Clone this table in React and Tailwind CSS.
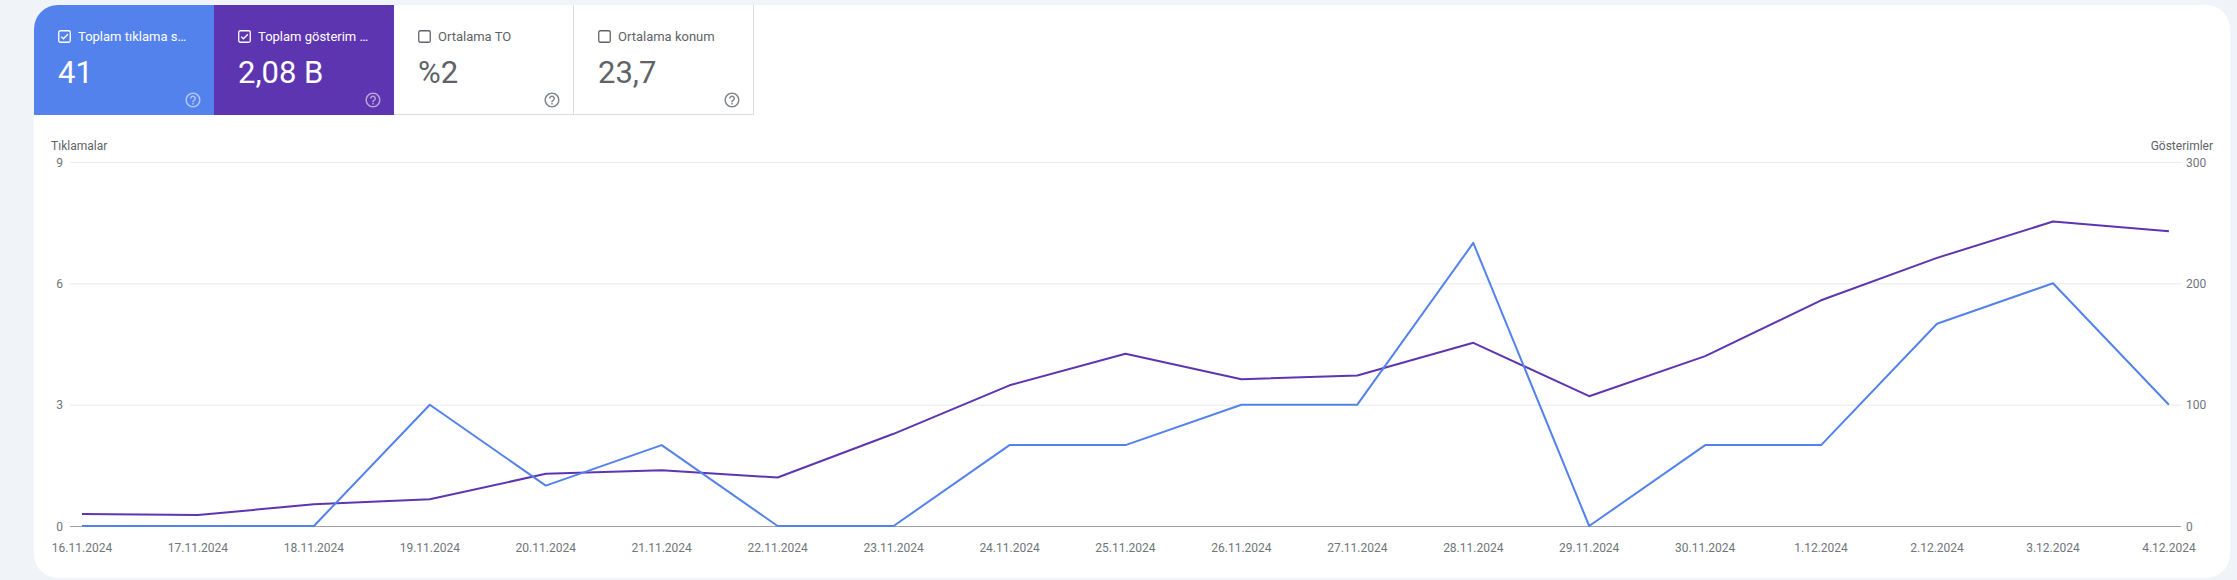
import React from "react";

const BLUE = "#5482ec";
const PURPLE = "#5e35b1";

const dates = [
    "16.11.2024", "17.11.2024", "18.11.2024", "19.11.2024", "20.11.2024", "21.11.2024", "22.11.2024",
    "23.11.2024", "24.11.2024", "25.11.2024", "26.11.2024", "27.11.2024", "28.11.2024", "29.11.2024",
    "30.11.2024", "1.12.2024", "2.12.2024", "3.12.2024", "4.12.2024",
];
const clicks = [0, 0, 0, 3, 1, 2, 0, 0, 2, 2, 3, 3, 7, 0, 2, 2, 5, 6, 3];
const impressions = [10, 9, 18, 22, 43, 46, 40, 76, 116, 142, 121, 124, 151, 107, 140, 186, 221, 251, 243];

const metrics = [
    { label: "Toplam tıklama sayısı", value: "41", on: true, bg: "bg-[#5482ec]" },
    { label: "Toplam gösterim sayısı", value: "2,08 B", on: true, bg: "bg-[#5e35b1]" },
    { label: "Ortalama TO", value: "%2", on: false },
    { label: "Ortalama konum", value: "23,7", on: false },
];

function Checkbox({ on }) {
    const c = on ? "#ffffff" : "#5f6368";
    return (
        <svg width="13" height="13" viewBox="0 0 13 13" className="shrink-0">
            <rect x="0.75" y="0.75" width="11.5" height="11.5" rx="1.5" fill="none" stroke={c} strokeWidth="1.3" />
            {on && <path d="M3.2 6.6 L5.4 8.8 L9.9 4.2" fill="none" stroke={c} strokeWidth="1.3" />}
        </svg>
    );
}

function HelpIcon({ color }) {
    return (
        <svg width="18" height="18" viewBox="0 0 24 24" fill={color}>
            <path d="M11 18h2v-2h-2v2zm1-16C6.48 2 2 6.48 2 12s4.48 10 10 10 10-4.48 10-10S17.52 2 12 2zm0 18c-4.41 0-8-3.59-8-8s3.59-8 8-8 8 3.59 8 8-3.59 8-8 8zm0-14c-2.21 0-4 1.79-4 4h2c0-1.1.9-2 2-2s2 .9 2 2c0 2-3 1.75-3 5h2c0-2.25 3-2.5 3-5 0-2.21-1.79-4-4-4z" />
        </svg>
    );
}

function Tile({ m }) {
    const box = m.on
        ? `${m.bg} text-white`
        : "bg-white text-[#5f6368] border-r border-b border-[#dadce0]";
    return (
        <div className={`w-[180px] h-[110px] flex flex-col pl-6 pr-3 pt-[22px] pb-3 ${box}`}>
            <div className="h-5 flex items-center gap-[7px] mr-3 min-w-0">
                <Checkbox on={m.on} />
                <span className="text-[13px] truncate">{m.label}</span>
            </div>
            <div className="mt-[8px] text-[31px] leading-9">{m.value}</div>
            <div className="mt-auto flex justify-end">
                <HelpIcon color={m.on ? "rgba(255,255,255,0.55)" : "#80868b"} />
            </div>
        </div>
    );
}

function Chart() {
    const W = 2196;
    const H = 424;
    const base = 372;
    const span = 364;
    const x0 = 48;
    const step = 115.94;
    const xs = dates.map((_, i) => x0 + i * step);
    const pts = (arr, max) => arr.map((v, i) => `${xs[i].toFixed(1)},${(base - (v * span) / max).toFixed(1)}`).join(" ");
    const grid = [
        { y: 8.5, l: "9", r: "300" },
        { y: 129.8, l: "6", r: "200" },
        { y: 251.2, l: "3", r: "100" },
        { y: 372.5, l: "0", r: "0" },
    ];
    return (
        <svg width={W} height={H} className="block" style={{ fontFamily: "Roboto, sans-serif" }}>
            {grid.map((g, i) => (
                <g key={g.l}>
                    <line x1="36" x2="2147" y1={g.y} y2={g.y} stroke={i === 3 ? "#9aa0a6" : "#e8eaed"} strokeWidth="1" />
                    <text x="29" y={g.y} textAnchor="end" dominantBaseline="central" fontSize="12" fill="#70757a">{g.l}</text>
                    <text x="2152" y={g.y} dominantBaseline="central" fontSize="12" fill="#70757a">{g.r}</text>
                </g>
            ))}
            <polyline points={pts(impressions, 300)} fill="none" stroke={PURPLE} strokeWidth="2" strokeLinejoin="round" />
            <polyline points={pts(clicks, 9)} fill="none" stroke={BLUE} strokeWidth="2" strokeLinejoin="round" />
            {dates.map((d, i) => (
                <text key={d} x={xs[i]} y="394" textAnchor="middle" dominantBaseline="central" fontSize="12" fill="#70757a">{d}</text>
            ))}
        </svg>
    );
}

export default function App() {
    return (
        <div className="min-h-[580px] bg-[#f0f4f9] pl-[34px] pr-[7px] pt-[5px] font-['Roboto',sans-serif]">
            <div className="w-[2196px] h-[573px] bg-white rounded-[24px] overflow-hidden flex flex-col">
                <div className="flex">
                    {metrics.map((m) => (
                        <Tile key={m.label} m={m} />
                    ))}
                </div>
                <div className="mt-[23px] h-4 flex justify-between px-[17px] text-[12px] leading-4 text-[#5f6368]">
                    <span>Tıklamalar</span>
                    <span>Gösterimler</span>
                </div>
                <Chart />
            </div>
        </div>
    );
}
